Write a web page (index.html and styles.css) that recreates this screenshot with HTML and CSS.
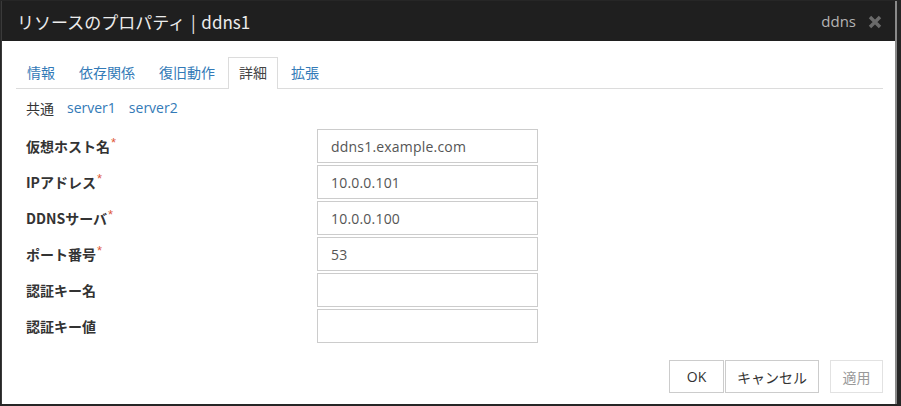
FILE: index.html
```html
<!DOCTYPE html>
<html lang="ja">
<head>
<meta charset="utf-8">
<title>リソースのプロパティ | ddns1</title>
<link rel="stylesheet" href="styles.css">
</head>
<body>
<div class="dialog">
  <div class="header">
    <div class="title">リソースのプロパティ | ddns1</div>
    <div class="header-right">
      <span class="type">ddns</span>
      <svg class="close" width="14" height="14" viewBox="0 0 14 14"><path d="M2 2 L12 12 M12 2 L2 12" stroke="#6a6a6a" stroke-width="3.4" stroke-linecap="butt" fill="none"/></svg>
    </div>
  </div>
  <div class="body">
    <ul class="tabs">
      <li class="tab">情報</li>
      <li class="tab">依存関係</li>
      <li class="tab">復旧動作</li>
      <li class="tab active">詳細</li>
      <li class="tab">拡張</li>
    </ul>
    <div class="servers">
      <span class="common">共通</span>
      <span class="link">server1</span>
      <span class="link">server2</span>
    </div>
    <div class="form">
      <label class="label">仮想ホスト名<span class="req">*</span></label>
      <input class="field" type="text" value="ddns1.example.com" readonly>
      <label class="label">IPアドレス<span class="req">*</span></label>
      <input class="field" type="text" value="10.0.0.101" readonly>
      <label class="label">DDNSサーバ<span class="req">*</span></label>
      <input class="field" type="text" value="10.0.0.100" readonly>
      <label class="label">ポート番号<span class="req">*</span></label>
      <input class="field" type="text" value="53" readonly>
      <label class="label">認証キー名</label>
      <input class="field" type="text" value="" readonly>
      <label class="label">認証キー値</label>
      <input class="field" type="text" value="" readonly>
    </div>
    <div class="footer">
      <button class="btn btn-ok">OK</button>
      <button class="btn btn-cancel">キャンセル</button>
      <button class="btn btn-apply" disabled>適用</button>
    </div>
  </div>
</div>
</body>
</html>
```

FILE: styles.css
```css
html, body {
  margin: 0;
  padding: 0;
}
body {
  background: #262626;
  width: 901px;
  height: 406px;
  overflow: hidden;
  font-family: "Open Sans", "Noto Sans CJK JP", sans-serif;
  color: #333;
}
.dialog {
  margin: 1px 0 0 1px;
  width: 896px;
  height: 403px;
  box-sizing: border-box;
  background: #fff;
  border-left: 1px solid #3a3a3a;
  border-right: 2px solid #8a8a8a;
  display: flex;
  flex-direction: column;
}
.header {
  height: 40px;
  background: #1f1f1f;
  display: flex;
  align-items: center;
  justify-content: space-between;
  padding: 0 13px 0 15px;
  flex-shrink: 0;
}
.title {
  font-family: "Noto Sans CJK JP", sans-serif;
  font-size: 17px;
  line-height: 20px;
  color: #ececec;
  margin-top: 1px;
  word-spacing: 2px;
}
.header-right {
  display: flex;
  align-items: center;
}
.type {
  font-size: 15px;
  line-height: 20px;
  color: #b4b4b4;
  margin-right: 12px;
}
.close {
  display: block;
  margin-top: 1px;
}
.body {
  padding: 0 12px 0 14px;
  flex: 1;
  display: flex;
  flex-direction: column;
}
.tabs {
  list-style: none;
  margin: 16px 0 0 0;
  padding: 0;
  display: flex;
  border-bottom: 1px solid #dcdcdc;
  height: 31px;
}
.tab {
  font-family: "Noto Sans CJK JP", sans-serif;
  font-size: 14px;
  line-height: 29px;
  height: 31px;
  box-sizing: border-box;
  padding: 0 10px;
  border: 1px solid transparent;
  border-bottom: none;
  margin-right: 2px;
  color: #337ab7;
}
.tab.active {
  border-color: #dcdcdc;
  background: #fff;
  color: #444;
  height: 32px;
}
.servers {
  margin-top: 9px;
  padding-left: 10px;
  font-size: 14px;
  line-height: 20px;
  display: flex;
  gap: 13px;
}
.common {
  font-family: "Noto Sans CJK JP", sans-serif;
  color: #333;
}
.link {
  color: #337ab7;
}
.form {
  margin-top: 11px;
  padding-left: 10px;
  display: grid;
  grid-template-columns: 291px 221px;
  grid-auto-rows: 34px;
  row-gap: 2px;
}
.label {
  font-size: 14px;
  font-weight: bold;
  color: #333;
  display: flex;
  align-items: center;
  line-height: 20px;
  font-family: "Noto Sans CJK JP", sans-serif;
}
.req {
  color: #e05a3a;
  font-family: "Liberation Sans", sans-serif;
  font-size: 13px;
  line-height: 13px;
  align-self: flex-start;
  margin-top: 7px;
  margin-left: 1px;
  font-weight: normal;
}
.field {
  box-sizing: border-box;
  width: 221px;
  height: 34px;
  border: 1px solid #cccccc;
  padding: 0 13px;
  margin: 0;
  font-family: "Open Sans", sans-serif;
  font-size: 14px;
  letter-spacing: 0.2px;
  color: #555;
  background: #fff;
  outline: none;
}
.footer {
  margin-top: 17px;
  display: flex;
  justify-content: flex-end;
}
.btn {
  height: 33px;
  box-sizing: border-box;
  border: 1px solid #cccccc;
  background: #fff;
  font-family: "Open Sans", "Noto Sans CJK JP", sans-serif;
  font-size: 14px;
  color: #333;
  padding: 0 11px;
  min-width: 55px;
  margin: 0;
}
.btn-ok {
  margin-right: 1px;
}
.btn-cancel {
  margin-right: 11px;
}
.btn-apply {
  border-color: #e2e2e2;
  color: #999;
  min-width: 53px;
}
```
